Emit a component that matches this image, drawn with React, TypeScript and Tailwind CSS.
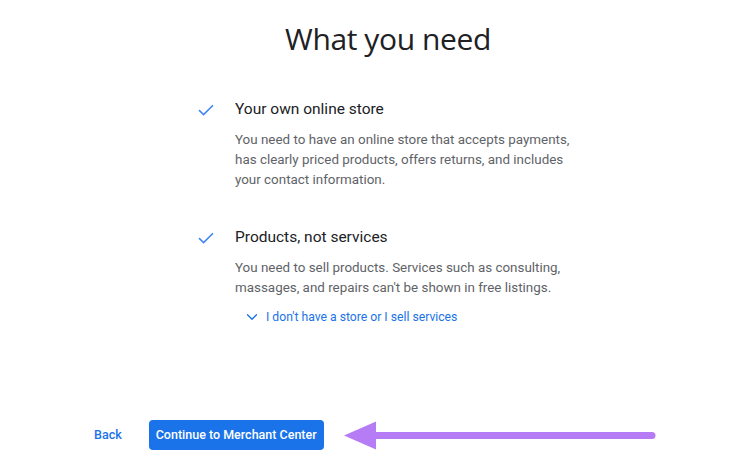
import { ChevronDown } from 'lucide-react'

const ITEMS = [
  {
    title: 'Your own online store',
    body: 'You need to have an online store that accepts payments, has clearly priced products, offers returns, and includes your contact information.',
  },
  {
    title: 'Products, not services',
    body: "You need to sell products. Services such as consulting, massages, and repairs can't be shown in free listings.",
  },
]

function Check() {
  return (
    <svg width="16" height="12" viewBox="0 0 16 12" className="shrink-0">
      <path d="M1 6.2 L5.6 10.6 L15 1.2" fill="none" stroke="#4285f4" strokeWidth="1.6" />
    </svg>
  )
}

export default function App() {
  return (
    <div className="w-[750px] h-[471px] bg-white flex flex-col font-['Roboto',sans-serif] overflow-hidden">
      {/* Title */}
      <h1 className="pl-[26px] pt-[19px] text-center text-[30px] leading-[40px] text-[#202124] font-['Open_Sans',sans-serif] tracking-[-0.4px]">
        What you need
      </h1>

      {/* Requirements */}
      <div className="pl-[198px] pt-[38px] flex flex-col gap-[35px]">
        {ITEMS.map((item, i) => (
          <div key={item.title} className="flex">
            <div className="w-[37px] pt-[7px]">
              <Check />
            </div>
            <div className="flex flex-col">
              <div className="text-[15.5px] leading-[24px] text-[#202124]">
                {item.title}
              </div>
              <p className="mt-[9px] w-[345px] text-[13.4px] leading-[20px] text-[#5f6368]">
                {item.body}
              </p>
              {i === 1 && (
                <button className="mt-[10px] ml-[8px] flex items-center gap-[5px] text-[12.2px] leading-[16px] text-[#1a73e8]">
                  <ChevronDown size={18} strokeWidth={1.8} />
                  I don't have a store or I sell services
                </button>
              )}
            </div>
          </div>
        ))}
      </div>

      {/* Footer */}
      <div className="mt-auto mb-[20px] flex items-center pl-[94px]">
        <button className="text-[12.5px] font-medium text-[#1a73e8]">Back</button>
        <button className="ml-[27px] h-[30px] w-[175px] rounded-[4px] bg-[#1a73e8] text-[12.5px] font-medium text-white">
          Continue to Merchant Center
        </button>
        <svg width="316" height="32" viewBox="0 0 316 32" className="ml-[19px]">
          <path d="M33 13 L309 13 a3.5 3.5 0 0 1 0 7 L33 20 Z" fill="#b57cf5" />
          <path d="M1 16.5 L33 2.5 L33 30.5 Z" fill="#b57cf5" />
        </svg>
      </div>
    </div>
  )
}
